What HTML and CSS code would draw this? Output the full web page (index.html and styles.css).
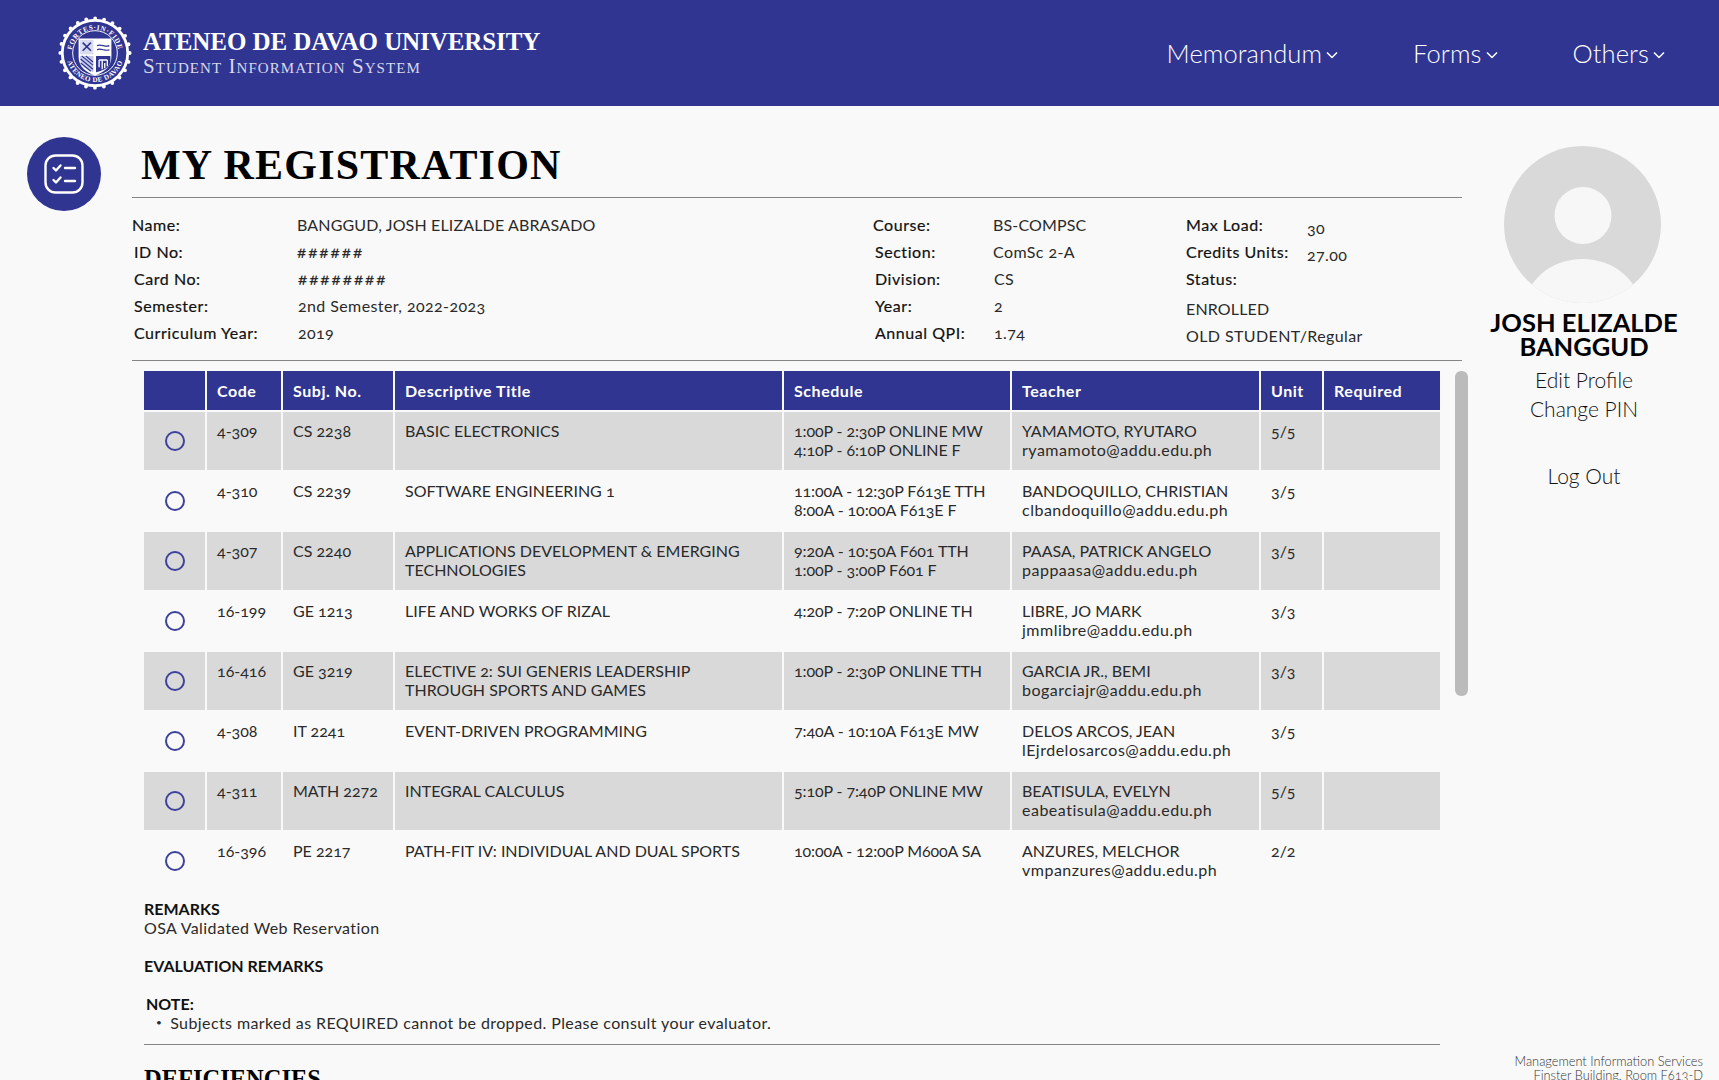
FILE: index.html
```html
<!DOCTYPE html>
<html lang="en">
<head>
<meta charset="utf-8">
<title>My Registration</title>
<link rel="stylesheet" href="styles.css">
</head>
<body>
<header class="topbar">
  <div class="brand">
    <svg class="seal" viewBox="0 0 80 80" aria-label="Ateneo de Davao seal">
      <circle cx="40" cy="40" r="36" fill="#fff"/>
      <circle cx="40" cy="40" r="36.5" fill="none" stroke="#fff" stroke-width="4" stroke-linecap="round" stroke-dasharray="0 9.55"/>
      <circle cx="40" cy="40" r="33" fill="#303591"/>
      <circle cx="40" cy="40" r="23.5" fill="none" stroke="#fff" stroke-width="1"/>
      <defs>
        <path id="sealTop" d="M40 40m-24.5 0a24.5 24.5 0 0 1 49 0"/>
        <path id="sealBottom" d="M40 40m-30.5 0a30.500 30.500 0 0 0 61 0"/>
      </defs>
      <text class="seal-text top"><textPath href="#sealTop" startOffset="50%" text-anchor="middle">FORTES·IN·FIDE</textPath></text>
      <text class="seal-text"><textPath href="#sealBottom" startOffset="50%" text-anchor="middle">ATENEO DE DAVAO</textPath></text>
      <g transform="translate(-3.200 -3.400) scale(1.08)">
        <path d="M24 26h32v18c0 10-8 15-16 18c-8-3-16-8-16-18z" fill="#fff"/>
        <path d="M25.500 27.500h13v14h-13z" fill="#d9dbee"/>
        <path d="M28 30l8 8M36 30l-8 8" stroke="#303591" stroke-width="1.600"/>
        <path d="M25.500 43h13v16c-5-2-13-5-13-14z" fill="#c6c9e6"/>
        <path d="M26 46l12 10M26 50l10 8M27 43l11 9M31 43l7 6" stroke="#303591" stroke-width="1.200"/>
        <path d="M41 28h14v6c-4 2-10 0-14 2z" fill="#fff"/>
        <path d="M42 33c4-2 8 2 12 0M42 37c4-2 8 2 12 0" stroke="#303591" stroke-width="1.200" fill="none"/>
        <path d="M41 43h14v5c0 6-6 9-14 11z" fill="#303591"/>
        <path d="M44 47h8M44 47v7M52 47v6M47 47v9M49.500 50v5" stroke="#fff" stroke-width="1.300" fill="none"/>
      </g>
    </svg>
    <div class="brand-text">
      <div class="brand-name">ATENEO DE DAVAO UNIVERSITY</div>
      <div class="brand-sub">Student Information System</div>
    </div>
  </div>
  <nav class="nav">
    <a class="nav-item">Memorandum<svg class="chev" viewBox="0 0 12 8"><path d="M1 1.500l5 5 5-5"/></svg></a>
    <a class="nav-item">Forms<svg class="chev" viewBox="0 0 12 8"><path d="M1 1.500l5 5 5-5"/></svg></a>
    <a class="nav-item">Others<svg class="chev" viewBox="0 0 12 8"><path d="M1 1.500l5 5 5-5"/></svg></a>
  </nav>
</header>

<main class="page">
  <div class="icon-col">
    <div class="page-icon">
      <svg viewBox="0 0 40 40" class="page-icon-svg">
        <rect x="1.500" y="1.500" width="37" height="37" rx="10" />
        <path d="M9.500 14l2.500 2.500 4.500-5M9.500 26l2.500 2.500 4.500-5"/>
        <path d="M21 14h10M21 27h10"/>
      </svg>
    </div>
  </div>

  <section class="content">
    <h1 class="title">MY REGISTRATION</h1>
    <hr class="rule">
    <div class="info">
      <div class="info-a">
        <div class="label first">Name:</div><div class="val first upper">BANGGUD, JOSH ELIZALDE ABRASADO</div>
        <div class="label">ID No:</div><div class="val first hash">######</div>
        <div class="label">Card No:</div><div class="val hash">########</div>
        <div class="label">Semester:</div><div class="val">2nd Semester, 2022-2023</div>
        <div class="label">Curriculum Year:</div><div class="val">2019</div>
      </div>
      <div class="info-b">
        <div class="label first">Course:</div><div class="val first upper">BS-COMPSC</div>
        <div class="label">Section:</div><div class="val first">ComSc 2-A</div>
        <div class="label">Division:</div><div class="val">CS</div>
        <div class="label">Year:</div><div class="val">2</div>
        <div class="label">Annual QPI:</div><div class="val">1.74</div>
      </div>
      <div class="info-c">
        <div class="label">Max Load:</div><div class="val low">30</div>
        <div class="label">Credits Units:</div><div class="val low">27.00</div>
        <div class="label wide">Status:</div>
        <div class="val wide low upper">ENROLLED</div>
        <div class="val wide low">OLD STUDENT/Regular</div>
      </div>
    </div>
    <hr class="rule">

    <div class="scroller">
      <table class="subjects">
        <colgroup>
          <col class="c-radio"><col class="c-code"><col class="c-subj"><col class="c-title"><col class="c-sched"><col class="c-teach"><col class="c-unit"><col class="c-req">
        </colgroup>
        <thead>
          <tr><th></th><th>Code</th><th>Subj. No.</th><th>Descriptive Title</th><th>Schedule</th><th>Teacher</th><th>Unit</th><th>Required</th></tr>
        </thead>
        <tbody>
          <tr><td class="pick"><span class="radio"></span></td><td>4-309</td><td>CS 2238</td><td>BASIC ELECTRONICS</td><td>1:00P - 2:30P ONLINE MW<br>4:10P - 6:10P ONLINE F</td><td>YAMAMOTO, RYUTARO<br><span class="email">ryamamoto@addu.edu.ph</span></td><td>5/5</td><td></td></tr>
          <tr><td class="pick"><span class="radio"></span></td><td>4-310</td><td>CS 2239</td><td>SOFTWARE ENGINEERING 1</td><td>11:00A - 12:30P F613E TTH<br>8:00A - 10:00A F613E F</td><td>BANDOQUILLO, CHRISTIAN<br><span class="email">clbandoquillo@addu.edu.ph</span></td><td>3/5</td><td></td></tr>
          <tr><td class="pick"><span class="radio"></span></td><td>4-307</td><td>CS 2240</td><td>APPLICATIONS DEVELOPMENT &amp; EMERGING TECHNOLOGIES</td><td>9:20A - 10:50A F601 TTH<br>1:00P - 3:00P F601 F</td><td>PAASA, PATRICK ANGELO<br><span class="email">pappaasa@addu.edu.ph</span></td><td>3/5</td><td></td></tr>
          <tr><td class="pick"><span class="radio"></span></td><td>16-199</td><td>GE 1213</td><td>LIFE AND WORKS OF RIZAL</td><td>4:20P - 7:20P ONLINE TH</td><td>LIBRE, JO MARK<br><span class="email">jmmlibre@addu.edu.ph</span></td><td>3/3</td><td></td></tr>
          <tr><td class="pick"><span class="radio"></span></td><td>16-416</td><td>GE 3219</td><td>ELECTIVE 2: SUI GENERIS LEADERSHIP THROUGH SPORTS AND GAMES</td><td>1:00P - 2:30P ONLINE TTH</td><td>GARCIA JR., BEMI<br><span class="email">bogarciajr@addu.edu.ph</span></td><td>3/3</td><td></td></tr>
          <tr><td class="pick"><span class="radio"></span></td><td>4-308</td><td>IT 2241</td><td>EVENT-DRIVEN PROGRAMMING</td><td>7:40A - 10:10A F613E MW</td><td>DELOS ARCOS, JEAN<br><span class="email">lEjrdelosarcos@addu.edu.ph</span></td><td>3/5</td><td></td></tr>
          <tr><td class="pick"><span class="radio"></span></td><td>4-311</td><td>MATH 2272</td><td>INTEGRAL CALCULUS</td><td>5:10P - 7:40P ONLINE MW</td><td>BEATISULA, EVELYN<br><span class="email">eabeatisula@addu.edu.ph</span></td><td>5/5</td><td></td></tr>
          <tr><td class="pick"><span class="radio"></span></td><td>16-396</td><td>PE 2217</td><td>PATH-FIT IV: INDIVIDUAL AND DUAL SPORTS</td><td>10:00A - 12:00P M600A SA</td><td>ANZURES, MELCHOR<br><span class="email">vmpanzures@addu.edu.ph</span></td><td>2/2</td><td></td></tr>
        </tbody>
      </table>
      <div class="notes">
        <div class="note-head">REMARKS</div>
        <div>OSA Validated Web Reservation</div>
        <div class="note-head gap">EVALUATION REMARKS</div>
        <div class="note-head gap nudge">NOTE:</div>
        <ul class="note-list"><li>Subjects marked as REQUIRED cannot be dropped. Please consult your evaluator.</li></ul>
        <hr class="rule flush">
        <h2 class="deficiencies">DEFICIENCIES</h2>
      </div>
      <div class="thumb"></div>
    </div>
  </section>

  <aside class="profile">
    <svg class="avatar" viewBox="0 0 157 157">
      <defs><clipPath id="avatarClip"><circle cx="78.500" cy="78.500" r="78.500"/></clipPath></defs>
      <circle cx="78.500" cy="78.500" r="78.500" fill="#d9d9d9"/>
      <circle cx="79" cy="69.500" r="28.500" fill="#f7f7f7"/>
      <ellipse cx="78.500" cy="163" rx="58" ry="50" fill="#f7f7f7" clip-path="url(#avatarClip)"/>
    </svg>
    <div class="person">JOSH ELIZALDE BANGGUD</div>
    <a class="plink">Edit Profile</a>
    <a class="plink">Change PIN</a>
    <a class="plink logout">Log Out</a>
    <div class="credits">Management Information Services<br>Finster Building, Room F613-D</div>
  </aside>
</main>
</body>
</html>
```
FILE: styles.css
```css
* { box-sizing: border-box; }
html, body { margin: 0; height: 1080px; overflow: hidden; }
body {
  background: #f9f9f9;
  color: #2a2a2a;
  font-family: "Lato", "Liberation Sans", sans-serif;
  font-size: 16px;
  line-height: 19px;
  letter-spacing: .4px;
  font-variant-numeric: oldstyle-nums;
}

/* top bar */
.topbar {
  height: 106px;
  background: #303591;
  color: #fff;
  display: flex;
  justify-content: space-between;
  align-items: center;
  padding: 0 54px 0 57px;
}
.brand { display: flex; align-items: center; gap: 10px; }
.seal { width: 76px; height: 76px; display: block; }
.seal-text { font-family: "Liberation Serif", serif; font-size: 7.4px; font-weight: 700; fill: #fff; letter-spacing: .5px; }
.seal-text.top { letter-spacing: .7px; }
.brand-text { margin-top: -3px; }
.brand-name {
  font-family: "Liberation Serif", serif;
  font-weight: 700;
  font-size: 25px;
  line-height: 29px;
  letter-spacing: -.08px;
  white-space: nowrap;
}
.brand-sub {
  font-family: "Liberation Serif", serif;
  font-variant: small-caps;
  font-size: 21px;
  line-height: 21px;
  letter-spacing: 1.07px;
  color: #d8d9ec;
  white-space: nowrap;
}
.nav { display: flex; gap: 75px; }
.nav-item {
  display: flex;
  align-items: center;
  gap: 4px;
  font-size: 25.500px;
  font-weight: 300;
  letter-spacing: .1px;
  line-height: 30px;
  white-space: nowrap;
}
.chev { width: 12px; height: 8px; fill: none; stroke: #fff; stroke-width: 1.5; margin-top: 3px; }

/* page */
.page { display: flex; height: 974px; overflow: hidden; }
.icon-col { width: 132px; flex: none; padding: 31px 0 0 27px; }
.page-icon {
  width: 74px; height: 74px; border-radius: 50%;
  background: #303591;
  display: flex; align-items: center; justify-content: center;
}
.page-icon-svg { width: 40px; height: 40px; fill: none; stroke: #fff; stroke-width: 2.4; stroke-linecap: round; stroke-linejoin: round; }

.content { width: 1336px; flex: none; }
.title {
  margin: 34px 0 0 9px;
  font-family: "Liberation Serif", serif;
  font-size: 42px;
  line-height: 50px;
  font-weight: 700;
  color: #000;
  letter-spacing: 1.2px;
  height: 57px;
}
.rule { border: 0; height: 1px; background: #858585; margin: 0 6px 0 0; }
.rule.flush { margin: 12px 0 0 0; width: 1296px; }

.info { display: flex; padding: 13px 0 14px; }
.info-a, .info-b, .info-c { display: grid; grid-auto-rows: 27px; align-items: center; }
.info-a { width: 741px; grid-template-columns: 165px 1fr; }
.info-b { width: 313px; grid-template-columns: 120px 1fr; }
.info-c { grid-template-columns: 120px 1fr; }
.label { font-weight: 400; color: #111; padding-left: 2px; letter-spacing: .55px; -webkit-text-stroke: .2px #111; }
.label.first { padding-left: 0; }
.val { font-weight: 400; padding-left: 1px; }
.val.first { padding-left: 0; }
.val.low { position: relative; top: 3px; }
.val.upper { letter-spacing: .15px; }
.val.hash { letter-spacing: 2px; font-size: 17px; }
.wide { grid-column: 1 / -1; }
.info-c .label, .info-c .val.wide { padding-left: 0; }

/* table */
.scroller { position: relative; padding: 8px 0 0 10px; }
.subjects { border-collapse: separate; border-spacing: 2px; table-layout: fixed; width: 1300px; }
.c-radio { width: 61px; } .c-code { width: 74px; } .c-subj { width: 110px; } .c-title { width: 387px; }
.c-sched { width: 226px; } .c-teach { width: 247px; } .c-unit { width: 61px; } .c-req { width: 116px; }
.subjects th {
  height: 39px; padding: 0 10px;
  background: #303591; color: #fff;
  font-weight: 700; text-align: left;
  letter-spacing: .55px;
}
.subjects td { height: 58px; padding: 9px 10px 10px; vertical-align: top; font-weight: 400; letter-spacing: 0; }
.subjects td:nth-child(5) { letter-spacing: -.1px; }
.email { letter-spacing: .5px; }
.subjects tbody tr:nth-child(odd) td { background: #d9d9d9; }
.subjects td.pick { padding: 0; vertical-align: middle; text-align: center; }
.radio { display: block; width: 20px; height: 20px; margin: 0 auto; border: 2px solid #3d429a; border-radius: 50%; }
.thumb { position: absolute; top: 10px; right: 0; width: 13px; height: 325px; border-radius: 6px; background: #bbb; }

.notes { padding: 7px 0 0 2px; font-weight: 400; }
.note-head { font-weight: 700; color: #111; letter-spacing: 0; }
.note-head.gap { margin-top: 19px; }
.note-head.nudge { padding-left: 2px; }
.note-list { margin: 0; padding: 0 0 0 12px; list-style: none; }
.note-list li { display: flex; gap: 8px; }
.note-list li::before { content: "•"; font-size: 10px; line-height: 18px; }
.deficiencies {
  margin: 17px 0 0 0;
  font-family: "Liberation Serif", serif;
  font-size: 24.500px;
  line-height: 34px;
  font-weight: 700;
  letter-spacing: 0;
  color: #000;
}

/* sidebar */
.profile { flex: 1; display: flex; flex-direction: column; align-items: center; padding: 40px 22px 0 0; text-align: center; }
.avatar { width: 157px; height: 157px; flex: none; margin-right: 4px; }
.person { width: 232px; margin-top: 8px; font-size: 25.500px; line-height: 23.500px; font-weight: 700; letter-spacing: 0; color: #000; }
.plink { font-size: 21px; font-weight: 300; line-height: 29px; letter-spacing: 0; white-space: nowrap; color: #111; }
.person + .plink { margin-top: 7px; }
.logout { margin-top: 38px; }
.credits {
  margin-top: auto; margin-bottom: -2px; margin-right: -3px;
  align-self: flex-end;
  text-align: right;
  font-size: 12.800px; line-height: 14px; font-weight: 300; letter-spacing: 0; color: #333;
  white-space: nowrap;
}
```
